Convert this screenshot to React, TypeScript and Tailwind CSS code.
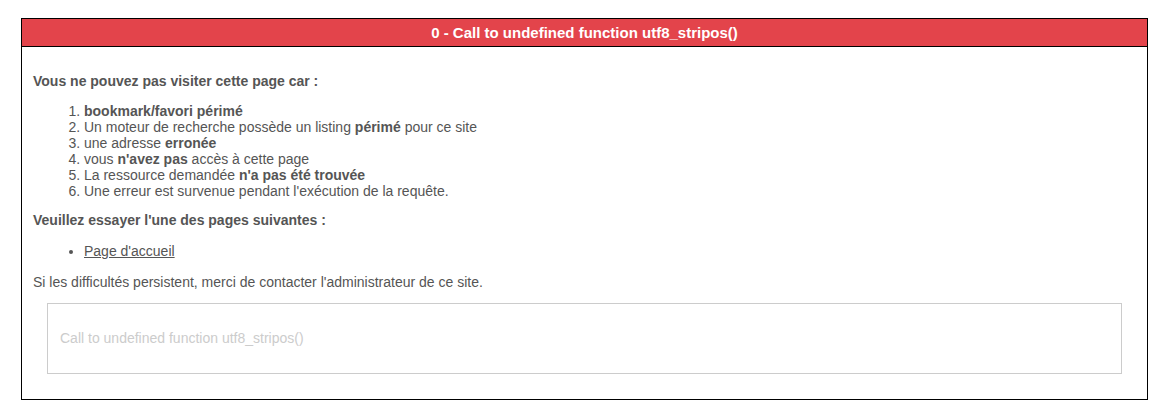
export default function App() {
  return (
    <div className="min-h-screen bg-white pt-[18px] pl-[21px] font-['Liberation_Sans',Arial,sans-serif] text-[14px] leading-[16px] text-[#555]">
      <div className="w-[1127px] border border-black">
        {/* Header */}
        <div className="flex h-[28px] items-center justify-center border-b border-black bg-[#e3444b] text-[15px] font-bold text-white">
          0 - Call to undefined function utf8_stripos()
        </div>

        {/* Body */}
        <div className="px-[11px] pt-[26px] pb-[25px]">
          <p className="font-bold">Vous ne pouvez pas visiter cette page car :</p>

          <ol className="mt-[14px] list-decimal pl-[51px]">
            <li>
              <b>bookmark/favori périmé</b>
            </li>
            <li>
              Un moteur de recherche possède un listing <b>périmé</b> pour ce site
            </li>
            <li>
              une adresse <b>erronée</b>
            </li>
            <li>
              vous <b>n'avez pas</b> accès à cette page
            </li>
            <li>
              La ressource demandée <b>n'a pas été trouvée</b>
            </li>
            <li>Une erreur est survenue pendant l'exécution de la requête.</li>
          </ol>

          <p className="mt-[13px] font-bold">Veuillez essayer l'une des pages suivantes :</p>

          <ul className="mt-[15px] list-disc pl-[51px]">
            <li>
              <a href="#" className="underline">
                Page d'accueil
              </a>
            </li>
          </ul>

          <p className="mt-[15px]">Si les difficultés persistent, merci de contacter l'administrateur de ce site.</p>

          <div className="mx-[14px] mt-[13px] border border-[#ccc] px-[12px] pt-[26px] pb-[27px] text-[#ccc]">
            Call to undefined function utf8_stripos()
          </div>
        </div>
      </div>
    </div>
  );
}
